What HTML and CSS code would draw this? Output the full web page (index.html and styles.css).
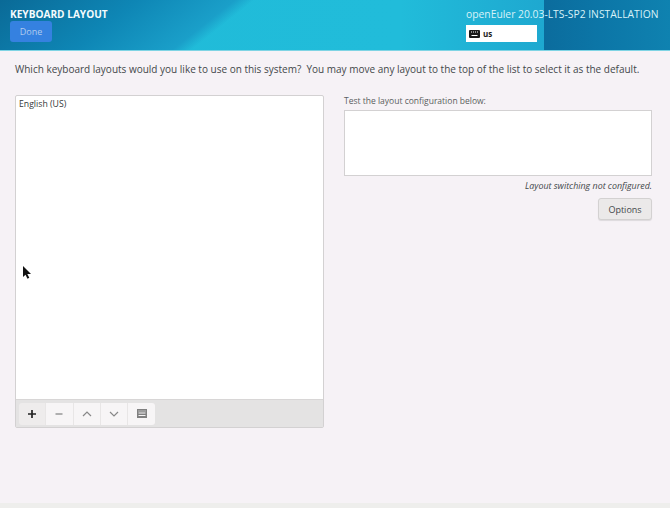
FILE: index.html
```html
<!DOCTYPE html>
<html lang="en">
<head>
<meta charset="utf-8">
<title>Keyboard Layout</title>
<link rel="stylesheet" href="styles.css">
</head>
<body>
<div class="screen">
  <header class="header">
    <div class="header-left">
      <h1 class="spoke-title">KEYBOARD LAYOUT</h1>
      <button class="done">Done</button>
    </div>
    <div class="header-right">
      <div class="product">openEuler 20.03-LTS-SP2 INSTALLATION</div>
      <div class="kbd-indicator">
        <svg class="kbd-icon" viewBox="0 0 11 8" width="11" height="8"><path fill="#1a1a1a" fill-rule="evenodd" d="M1 0h9a1 1 0 0 1 1 1v6a1 1 0 0 1-1 1H1a1 1 0 0 1-1-1V1a1 1 0 0 1 1-1zM2 1.500v1h1v-1zM4 1.500v1h1v-1zM6 1.500v1h1v-1zM8 1.500v1h1v-1zM2.500 5v1h6V5z"/></svg>
        <span>us</span>
      </div>
    </div>
  </header>
  <main class="content">
    <p class="intro">Which keyboard layouts would you like to use on this system?&nbsp; You may move any layout to the top of the list to select it as the default.</p>
    <div class="columns">
      <section class="layouts">
        <div class="list"><div class="row">English (US)</div></div>
        <div class="toolbar">
          <div class="group">
            <button class="tool active"><svg viewBox="0 0 10 10" width="10" height="10"><path d="M5 1v8M1 5h8" stroke="#222" stroke-width="1.7" fill="none"/></svg></button>
            <button class="tool"><svg viewBox="0 0 10 10" width="10" height="10"><path d="M1.500 5h7" stroke="#888" stroke-width="1.3" fill="none"/></svg></button>
            <button class="tool"><svg viewBox="0 0 10 10" width="10" height="10"><path d="M1 7l4-4 4 4" stroke="#888" stroke-width="1.2" fill="none"/></svg></button>
            <button class="tool"><svg viewBox="0 0 10 10" width="10" height="10"><path d="M1 3l4 4 4-4" stroke="#888" stroke-width="1.2" fill="none"/></svg></button>
            <button class="tool"><svg viewBox="0 0 10 9" width="10" height="9"><path fill="#808080" fill-rule="evenodd" d="M0 0h10v9H0zM1.500 1.500v1h1v-1zM3.500 1.500v1h1v-1zM5.500 1.500v1h1v-1zM7.500 1.500v1h1v-1zM1.500 3.500v1h7v-1zM1.500 6v1h7V6z"/></svg></button>
          </div>
        </div>
      </section>
      <section class="test">
        <label class="test-label">Test the layout configuration below:</label>
        <div class="test-box"></div>
        <p class="switching">Layout switching not configured.</p>
        <button class="options">Options</button>
      </section>
    </div>
  </main>
  <svg class="cursor" viewBox="0 0 8 13" width="8" height="13"><path d="M0 0v11l2.500-2.300 2 4 1.800-.9-2-3.800H8z" fill="#111"/></svg>
  <div class="footer"></div>
</div>
</body>
</html>
```
FILE: styles.css
```css
* { box-sizing: border-box; }
html, body { margin: 0; padding: 0; }
body { width: 670px; height: 508px; overflow: hidden; background: #f6f2f6; font-family: "Open Sans", "Noto Sans", sans-serif; color: #2e3436; }
.screen { position: relative; width: 670px; height: 508px; display: flex; flex-direction: column; }
.header {
  height: 51px; flex: none; display: flex; justify-content: space-between; padding: 7px 11px 0 10px;
  background:
    linear-gradient(90deg, transparent 544px, #0b6c9d 544px, #0c76a7 600px, #0f82b0 670px),
    linear-gradient(141.600deg, #0a6a97 0, #0e86b5 85px, #1a9fc9 146px, rgba(32,187,216,0) 158px),
    linear-gradient(90deg, #20bbd8 0, #21bcda 400px, #1ea8d0 544px);
  border-bottom: 1px solid #7fd4e4;
}
.spoke-title { margin: 0; font-size: 10.100px; line-height: 14px; font-weight: 700; color: #f4fbfd; }
.done { display: block; width: 42px; height: 21px; margin-top: 0; padding: 0; border: 0; border-radius: 3px; background: #3581e0; color: #b0cbee; font: 9px "Open Sans", sans-serif; }
.header-right { width: 193px; }
.product { font-size: 10.340px; line-height: 15px; color: #d8f2f8; white-space: nowrap; }
.kbd-indicator { display: flex; align-items: center; gap: 3px; width: 71px; height: 17px; margin-top: 3px; padding-left: 3px; background: #fff; font-size: 8px; font-weight: 700; color: #222; }
.content { flex: 1; padding: 0 18px 0 15px; }
.intro { margin: 10px 0 0; font-size: 10px; line-height: 16px; color: #43474a; white-space: nowrap; }
.columns { display: flex; gap: 20px; margin-top: 18px; }
.layouts { width: 309px; height: 333px; display: flex; flex-direction: column; border: 1px solid #d3d1d2; border-radius: 2px; background: #fff; }
.list { flex: 1; padding: 1px 3px; }
.row { font-size: 8.700px; line-height: 14px; color: #33383a; }
.toolbar { height: 28px; flex: none; display: flex; align-items: center; padding-left: 3px; background: #e4e3e3; border-top: 1px solid #d8d6d6; }
.group { display: flex; }
.tool { width: 27.300px; height: 22px; padding: 0; border: 0; border-right: 1px solid #e8e6e6; background: #f7f5f6; display: flex; align-items: center; justify-content: center; }
.tool:first-child { border-radius: 3px 0 0 3px; }
.tool:last-child { border-right: 0; border-radius: 0 3px 3px 0; }
.tool.active { background: #eeecec; }
.test { width: 308px; display: flex; flex-direction: column; }
.test-label { font-size: 8.500px; line-height: 12px; color: #5a5e60; }
.test-box { height: 66px; margin-top: 3px; background: #fff; border: 1px solid #d3d1d2; }
.switching { margin: 3px 0 0; text-align: right; font-size: 8.900px; line-height: 13px; font-style: italic; color: #43474a; }
.options { align-self: flex-end; width: 54px; height: 22px; margin-top: 6px; padding: 0; background: #ebe9e9; border: 1px solid #d3d1d1; border-radius: 3px; font: 9px "Open Sans", sans-serif; color: #43474a; box-shadow: 0 1px 1px rgba(0,0,0,.1); }
.cursor { position: absolute; left: 23px; top: 266px; }
.footer { height: 5px; flex: none; background: #eeeeec; }
```
